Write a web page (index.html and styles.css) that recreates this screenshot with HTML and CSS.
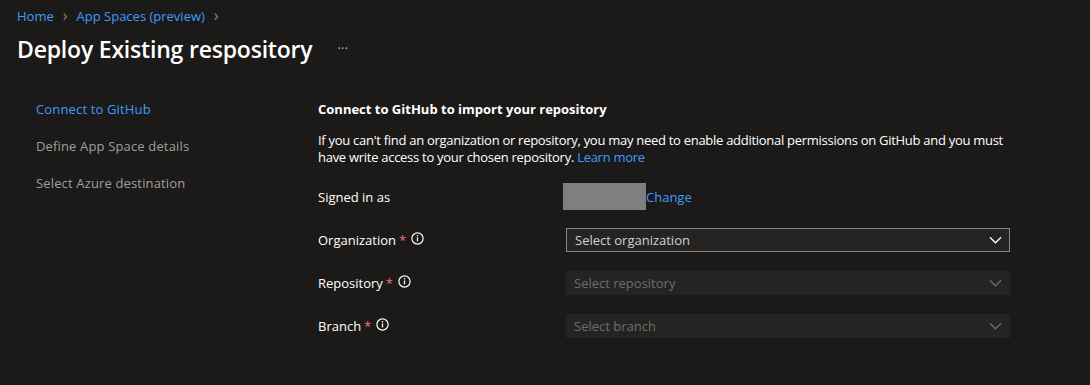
FILE: index.html
```html
<!DOCTYPE html>
<html lang="en">
<head>
<meta charset="utf-8">
<title>Deploy Existing respository</title>
<link rel="stylesheet" href="styles.css">
</head>
<body>
<div class="page">
  <nav class="breadcrumb">
    <a class="crumb" href="#">Home</a>
    <span class="sep">&#x203A;</span>
    <a class="crumb" href="#">App Spaces (preview)</a>
    <span class="sep">&#x203A;</span>
  </nav>
  <header class="title-row">
    <h1 class="title">Deploy Existing respository</h1>
    <span class="more">&middot;&middot;&middot;</span>
  </header>
  <div class="body">
    <ul class="steps">
      <li class="step active">Connect to GitHub</li>
      <li class="step">Define App Space details</li>
      <li class="step">Select Azure destination</li>
    </ul>
    <main class="content">
      <h2 class="heading">Connect to GitHub to import your repository</h2>
      <p class="desc">If you can't find an organization or repository, you may need to enable additional permissions on GitHub and you must have write access to your chosen repository. <a class="link" href="#">Learn more</a></p>
      <div class="form">
        <div class="row signed">
          <div class="label">Signed in as</div>
          <div class="value"><span class="redacted"></span><a class="link" href="#">Change</a></div>
        </div>
        <div class="row">
          <div class="label">Organization <span class="req">*</span> <svg class="info" viewBox="0 0 13 13" width="13" height="13"><circle cx="6.5" cy="6.5" r="5.6" fill="none" stroke="currentColor" stroke-width="1.2"/><rect x="5.85" y="5.4" width="1.3" height="4" fill="currentColor"/><circle cx="6.5" cy="3.8" r="0.8" fill="currentColor"/></svg></div>
          <div class="select enabled"><span>Select organization</span><svg class="chev" viewBox="0 0 14 8" width="13" height="8"><path d="M1 1l6 6 6-6" fill="none" stroke="currentColor" stroke-width="1.3"/></svg></div>
        </div>
        <div class="row">
          <div class="label">Repository <span class="req">*</span> <svg class="info" viewBox="0 0 13 13" width="13" height="13"><circle cx="6.5" cy="6.5" r="5.6" fill="none" stroke="currentColor" stroke-width="1.2"/><rect x="5.85" y="5.4" width="1.3" height="4" fill="currentColor"/><circle cx="6.5" cy="3.8" r="0.8" fill="currentColor"/></svg></div>
          <div class="select disabled"><span>Select repository</span><svg class="chev" viewBox="0 0 14 8" width="13" height="8"><path d="M1 1l6 6 6-6" fill="none" stroke="currentColor" stroke-width="1.3"/></svg></div>
        </div>
        <div class="row">
          <div class="label">Branch <span class="req">*</span> <svg class="info" viewBox="0 0 13 13" width="13" height="13"><circle cx="6.5" cy="6.5" r="5.6" fill="none" stroke="currentColor" stroke-width="1.2"/><rect x="5.85" y="5.4" width="1.3" height="4" fill="currentColor"/><circle cx="6.5" cy="3.8" r="0.8" fill="currentColor"/></svg></div>
          <div class="select disabled"><span>Select branch</span><svg class="chev" viewBox="0 0 14 8" width="13" height="8"><path d="M1 1l6 6 6-6" fill="none" stroke="currentColor" stroke-width="1.3"/></svg></div>
        </div>
      </div>
    </main>
  </div>
</div>
</body>
</html>
```

FILE: styles.css
```css
html, body {
  margin: 0;
  padding: 0;
  background: #1b1a19;
  width: 1090px;
  height: 385px;
  overflow: hidden;
}
body {
  font-family: "Open Sans", "Noto Sans", sans-serif;
  font-size: 13px;
  color: #ffffff;
}
.page {
  padding: 6px 0 0 17px;
}
.breadcrumb {
  display: flex;
  align-items: center;
  height: 20px;
  gap: 9px;
}
.crumb {
  color: #3f9bff;
  text-decoration: none;
  font-size: 13px;
}
.sep {
  color: #8a8886;
  font-size: 16px;
  line-height: 16px;
  margin-top: -2px;
}
.title-row {
  display: flex;
  align-items: center;
  height: 46px;
}
.title {
  margin: 0;
  font-size: 23px;
  font-weight: 600;
  color: #ffffff;
  letter-spacing: -0.2px;
}
.more {
  margin-left: 25px;
  color: #c8c6c4;
  font-size: 12px;
  letter-spacing: 0.5px;
  margin-top: -2px;
}
.body {
  display: flex;
  padding-top: 28px;
}
.steps {
  list-style: none;
  margin: 0;
  padding: 0 0 0 19px;
  width: 282px;
  display: flex;
  flex-direction: column;
  gap: 19px;
}
.step {
  color: #a19f9d;
  height: 18px;
  line-height: 18px;
  letter-spacing: 0.15px;
}
.step.active {
  color: #3f9bff;
}
.content {
  width: 700px;
}
.heading {
  margin: 0;
  font-size: 13px;
  font-weight: 700;
  line-height: 18px;
  height: 18px;
}
.desc {
  margin: 14px 0 0;
  line-height: 17px;
  letter-spacing: -0.28px;
  width: 690px;
}
.link {
  color: #3f9bff;
  text-decoration: none;
}
.form {
  margin-top: 17px;
  display: flex;
  flex-direction: column;
  gap: 19px;
}
.row {
  display: flex;
  align-items: center;
  height: 24px;
}
.row.signed {
  height: 27px;
  margin-bottom: -1px;
}
.label {
  width: 248px;
  display: flex;
  align-items: center;
  gap: 3px;
}
.req {
  color: #f1707b;
}
.info {
  color: #ffffff;
  margin-left: 2px;
  margin-top: -4px;
}
.value {
  display: flex;
  align-items: center;
  margin-left: -3px;
}
.redacted {
  display: inline-block;
  width: 83px;
  height: 27px;
  background: #7f7f7f;
}
.select {
  width: 444px;
  height: 24px;
  box-sizing: border-box;
  display: flex;
  align-items: center;
  justify-content: space-between;
  padding: 0 8px 0 8px;
  background: #252423;
}
.select.enabled {
  border: 1px solid #8a8886;
  color: #d2d0ce;
  padding-left: 8px;
  padding-right: 7px;
}
.select.disabled {
  color: #6f6d6b;
}
.select.enabled .chev {
  color: #ffffff;
}
.select.disabled .chev {
  color: #6f6d6b;
}
```
